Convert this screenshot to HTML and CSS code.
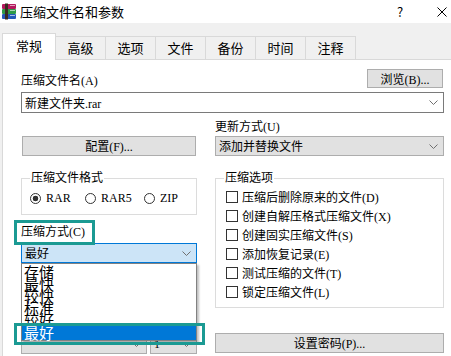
FILE: index.html
```html
<!DOCTYPE html>
<html lang="zh-CN">
<head>
    <meta charset="UTF-8">
    <title>压缩文件名和参数</title>
    <link rel="stylesheet" href="styles.css">
</head>
<body>

    <div class="dialog">
        <div class="titlebar">
            <svg class="app-icon" viewBox="0 0 16 17" width="16" height="17">
                <rect x="1" y="1" width="14" height="5" rx="1" fill="#b5195e"/>
                <rect x="1" y="6" width="14" height="5" rx="1" fill="#2f9a48"/>
                <rect x="1" y="11" width="14" height="5" rx="1" fill="#2458b8"/>
                <path d="M9 2.5h5M9 7.5h5M9 12.5h5" stroke="#fff" stroke-opacity="0.6" stroke-width="1"/>
                <rect x="4" y="0.5" width="3" height="16" fill="#3a2a20"/>
            </svg>
            <span class="title">压缩文件名和参数</span>
            <span class="title-help">?</span>
            <svg class="title-close" viewBox="0 0 10 10" width="10" height="10">
                <path d="M0.5 0.5L9.5 9.5M9.5 0.5L0.5 9.5" stroke="#000" stroke-width="1"/>
            </svg>
        </div>

        <div class="tabs">
            <div class="tab active">常规</div>
            <div class="tab">高级</div>
            <div class="tab">选项</div>
            <div class="tab">文件</div>
            <div class="tab">备份</div>
            <div class="tab">时间</div>
            <div class="tab">注释</div>
        </div>

        <div class="panel">
            <div class="name-row">
                <span class="label">压缩文件名(A)</span>
                <button class="btn browse">浏览(B)...</button>
            </div>
            <div class="combo edit">
                <span>新建文件夹.rar</span>
                <svg class="chevron" viewBox="0 0 9 5" width="9" height="5"><polyline points="0.5,0.5 4.5,4.5 8.5,0.5"/></svg>
            </div>

            <div class="columns">
                <div class="col">
                    <button class="btn config">配置(F)...</button>

                    <fieldset class="group format">
                        <legend>压缩文件格式</legend>
                        <div class="radios">
                            <span class="radio rar"><i class="dot checked"></i>RAR</span>
                            <span class="radio rar5"><i class="dot"></i>RAR5</span>
                            <span class="radio"><i class="dot"></i>ZIP</span>
                        </div>
                    </fieldset>

                    <div class="label method-label">压缩方式(C)</div>
                    <div class="combo focus">
                        <span>最好</span>
                        <svg class="chevron" viewBox="0 0 9 5" width="9" height="5"><polyline points="0.5,0.5 4.5,4.5 8.5,0.5"/></svg>
                    </div>

                    <div class="bottom-combos">
                        <div class="combo wide">
                            <span></span>
                            <svg class="chevron" viewBox="0 0 9 5" width="9" height="5"><polyline points="0.5,0.5 4.5,4.5 8.5,0.5"/></svg>
                        </div>
                        <div class="combo narrow">
                            <span>1</span>
                            <svg class="chevron" viewBox="0 0 9 5" width="9" height="5"><polyline points="0.5,0.5 4.5,4.5 8.5,0.5"/></svg>
                        </div>
                    </div>
                </div>

                <div class="col">
                    <div class="label update-label">更新方式(U)</div>
                    <div class="combo update">
                        <span>添加并替换文件</span>
                        <svg class="chevron" viewBox="0 0 9 5" width="9" height="5"><polyline points="0.5,0.5 4.5,4.5 8.5,0.5"/></svg>
                    </div>

                    <fieldset class="group options">
                        <legend>压缩选项</legend>
                        <div class="check"><i class="box"></i>压缩后删除原来的文件(D)</div>
                        <div class="check"><i class="box"></i>创建自解压格式压缩文件(X)</div>
                        <div class="check"><i class="box"></i>创建固实压缩文件(S)</div>
                        <div class="check"><i class="box"></i>添加恢复记录(E)</div>
                        <div class="check"><i class="box"></i>测试压缩的文件(T)</div>
                        <div class="check"><i class="box"></i>锁定压缩文件(L)</div>
                    </fieldset>

                    <button class="btn password">设置密码(P)...</button>
                </div>
            </div>

            <!-- open list of the 压缩方式 combo -->
            <ul class="dropdown">
                <li>存储</li>
                <li>最快</li>
                <li>较快</li>
                <li>标准</li>
                <li>较好</li>
                <li class="selected">最好</li>
            </ul>

            <div class="mark mark-label"></div>
            <div class="mark mark-item"></div>
        </div>
    </div>

</body>
</html>
```

FILE: styles.css
```css
* {
    box-sizing: border-box;
}

body {
    margin: 0;
    background-color: #f0f0f0;
    font-family: "Liberation Serif", "Noto Sans CJK SC", serif;
    font-size: 12px;
    color: #000;
}

.dialog {
    width: 451px;
    height: 356px;
    overflow: hidden;
    display: flex;
    flex-direction: column;
}

/* title bar */
.titlebar {
    height: 23px;
    flex-shrink: 0;
    display: flex;
    align-items: center;
    padding-left: 1px;
    background-color: #fff;
    font-family: "Noto Sans CJK SC", sans-serif;
}

.app-icon {
    margin-right: 3px;
}

.title {
    flex: 1;
    font-size: 13px;
}

.title-help {
    width: 20px;
    text-align: center;
    font-size: 13px;
    margin-right: 27px;
}

.title-close {
    margin-right: 4px;
}

/* tabs */
.tabs {
    height: 36px;
    flex-shrink: 0;
    display: flex;
    align-items: flex-end;
    padding-left: 2px;
    font-family: "Noto Sans CJK SC", sans-serif;
    font-size: 13px;
}

.tab {
    height: 23px;
    line-height: 21px;
    padding: 0 11.5px;
    margin-left: -1px;
    border: 1px solid #d9d9d9;
    border-bottom: none;
    background-color: #f0f0f0;
}

.tab.active {
    position: relative;
    z-index: 1;
    height: 27px;
    line-height: 24px;
    margin: 0 0 -1px 0;
    padding: 0 13px;
    background-color: #fff;
}

/* page */
.panel {
    flex: 1;
    position: relative;
    margin-left: 2px;
    padding: 9px 7px 0 18px;
    background-color: #fff;
    border-top: 1px solid #d9d9d9;
    border-left: 1px solid #d9d9d9;
}

.label {
    line-height: 14px;
}

.name-row {
    height: 19px;
    display: flex;
    justify-content: space-between;
    align-items: flex-end;
}

.btn {
    display: flex;
    align-items: center;
    justify-content: center;
    padding: 0;
    height: 20px;
    font: inherit;
    color: #000;
    background-color: #e1e1e1;
    border: 1px solid #adadad;
}

.browse {
    width: 76px;
    height: 19px;
    margin-right: 1px;
}

.combo {
    height: 20px;
    display: flex;
    align-items: center;
    justify-content: space-between;
    padding: 0 5px 0 3px;
    background-color: #e1e1e1;
    border: 1px solid #adadad;
    white-space: nowrap;
}

.combo.edit {
    height: 21px;
    margin-top: 4px;
    background-color: #fff;
    border-color: #7a7a7a;
}

.combo.focus {
    margin-top: 4px;
    background-color: #cce4f7;
    border-color: #0078d7;
}

.chevron {
    flex-shrink: 0;
    fill: none;
    stroke: #707070;
    stroke-width: 1;
}

.columns {
    display: grid;
    grid-template-columns: 176px 1fr;
    column-gap: 18px;
}

.col {
    display: flex;
    flex-direction: column;
}

.config {
    width: 174px;
    margin: 23px 0 0 1px;
}

.group {
    margin: 15px 0 0 0;
    border: 1px solid #dcdcdc;
    min-width: 0;
}

.group legend {
    padding: 0 1px;
    line-height: 14px;
}

.format {
    padding: 6px 0 9px 8px;
}

.radios {
    height: 14px;
    display: flex;
    align-items: center;
}

.radio {
    display: flex;
    align-items: center;
    gap: 5px;
}

.radio.rar {
    width: 55px;
}

.radio.rar5 {
    width: 59px;
}

.dot {
    width: 11px;
    height: 11px;
    border: 1px solid #333;
    border-radius: 50%;
    background-color: #fff;
}

.dot.checked {
    background: radial-gradient(circle, #333 0 2.6px, #fff 3.1px);
}

.method-label {
    margin-top: 10px;
}

.bottom-combos {
    display: flex;
    gap: 3px;
    margin-top: 71px;
}

.combo.wide {
    width: 126px;
}

.combo.narrow {
    width: 47px;
}

.update-label {
    margin-top: 7px;
}

.combo.update {
    margin-top: 2px;
}

.options {
    padding: 2px 0 6px 10px;
}

.options legend {
    margin-left: -2px;
}

.check {
    height: 19px;
    display: flex;
    align-items: center;
    gap: 4px;
    white-space: nowrap;
}

.box {
    width: 12px;
    height: 12px;
    border: 1px solid #333;
    background-color: #fff;
}

.password {
    margin-top: 25px;
}

/* open drop-down list */
.dropdown {
    position: absolute;
    left: 18px;
    top: 203px;
    width: 176px;
    margin: 0;
    padding: 2px 0 0 0;
    list-style: none;
    background-color: #fff;
    border: 1px solid #828282;
    box-shadow: 2px 2px 2px rgba(0, 0, 0, 0.25);
    font-family: "Noto Sans CJK SC", sans-serif;
    font-size: 15px;
}

.dropdown li {
    height: 12px;
    line-height: 12px;
    padding-left: 2px;
}

.dropdown li.selected {
    position: relative;
    height: 14px;
    line-height: 14px;
    color: #fff;
    background-color: #0078d7;
}

/* highlight marks */
.mark {
    position: absolute;
    border: 3px solid #1b9a93;
}

.mark-label {
    left: 11px;
    top: 160px;
    width: 81px;
    height: 25px;
}

.mark-item {
    left: 11px;
    top: 263px;
    width: 191px;
    height: 22px;
}
```
